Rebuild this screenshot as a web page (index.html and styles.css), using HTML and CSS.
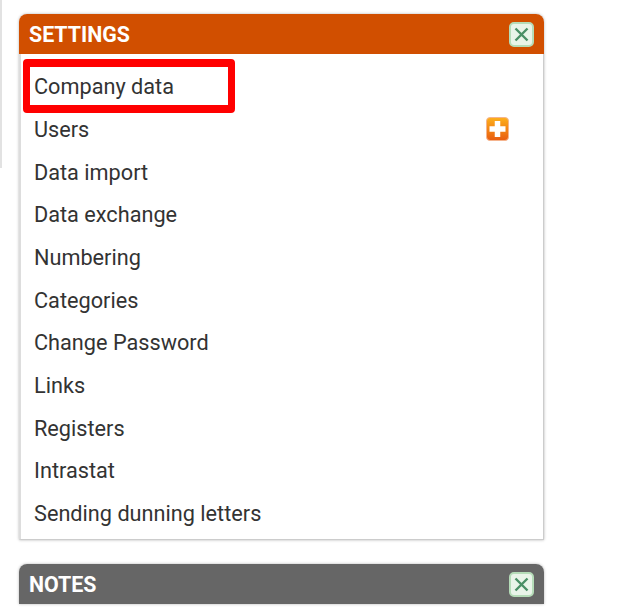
FILE: index.html
```html
<!DOCTYPE html>
<html lang="en">
<head>
    <meta charset="UTF-8">
    <title>Settings</title>
    <link rel="stylesheet" href="styles.css">
</head>
<body>
    <div class="side-edge"></div>

    <div class="panel">
        <div class="panel-head orange">
            <span>SETTINGS</span>
            <svg class="close-icon" width="25" height="25" viewBox="0 0 25 25">
                <rect x="1" y="1" width="23" height="23" rx="4" fill="#e9f4e9" stroke="#b5dcb8" stroke-width="2"/>
                <path d="M6.5 6.5 L18.5 18.5 M18.5 6.5 L6.5 18.5" stroke="#4a8f66" stroke-width="2.4"/>
            </svg>
        </div>
        <ul class="panel-menu">
            <li>Company data</li>
            <li>Users
                <svg class="add-icon" width="23" height="24" viewBox="0 0 23 24">
                    <defs>
                        <linearGradient id="addFill" x1="0" y1="0" x2="0" y2="1">
                            <stop offset="0" stop-color="#fdb01c"/>
                            <stop offset="1" stop-color="#e95c10"/>
                        </linearGradient>
                    </defs>
                    <rect x="0.5" y="0.5" width="22" height="23" rx="3.5" fill="url(#addFill)" stroke="#f5b48e"/>
                    <path d="M11.5 4 V20 M3.5 12 H19.5" stroke="#fff" stroke-width="5.5"/>
                </svg>
            </li>
            <li>Data import</li>
            <li>Data exchange</li>
            <li>Numbering</li>
            <li>Categories</li>
            <li>Change Password</li>
            <li>Links</li>
            <li>Registers</li>
            <li>Intrastat</li>
            <li>Sending dunning letters</li>
        </ul>
        <div class="highlight"></div>
    </div>

    <div class="panel">
        <div class="panel-head grey">
            <span>NOTES</span>
            <svg class="close-icon" width="25" height="25" viewBox="0 0 25 25">
                <rect x="1" y="1" width="23" height="23" rx="4" fill="#e9f4e9" stroke="#b5dcb8" stroke-width="2"/>
                <path d="M6.5 6.5 L18.5 18.5 M18.5 6.5 L6.5 18.5" stroke="#4a8f66" stroke-width="2.4"/>
            </svg>
        </div>
    </div>
</body>
</html>
```

FILE: styles.css
```css
* {
    box-sizing: border-box;
    margin: 0;
    padding: 0;
    font-family: 'Roboto', sans-serif;
}

html, body {
    height: 608px;
    overflow: hidden;
}

body {
    background: #fff;
    color: #333;
    padding: 14px 0 0 19px;
}

.side-edge {
    position: absolute;
    top: 0;
    left: 0;
    width: 2px;
    height: 168px;
    background: #e2e2e2;
}

.panel {
    position: relative;
    width: 525px;
    margin-bottom: 24px;
    border-radius: 8px 8px 0 0;
    box-shadow: 0 0 3px rgba(0, 0, 0, 0.3);
}

.panel-head {
    display: flex;
    align-items: center;
    justify-content: space-between;
    height: 40px;
    padding: 1px 10px 0;
    border-radius: 8px 8px 0 0;
    color: #fff;
    font-size: 21.33px;
    font-weight: 700;
}

.orange {
    background: #d14f00;
}

.grey {
    background: #666;
}

.close-icon {
    display: block;
}

.panel-menu {
    list-style: none;
    height: 486px;
    padding: 11.5px 0 0 13px;
    background: #fff;
    border: 1px solid #ccc;
    border-top: none;
    border-left-width: 2px;
    border-left-color: #ddd;
}

.panel-menu li {
    display: flex;
    align-items: center;
    justify-content: space-between;
    height: 42.67px;
    padding-right: 34.5px;
    font-size: 21.7px;
}

.highlight {
    position: absolute;
    top: 45px;
    left: 4px;
    width: 212px;
    height: 54px;
    border-style: solid;
    border-color: #f00;
    border-width: 8px 7px;
    border-radius: 4px;
}
```
